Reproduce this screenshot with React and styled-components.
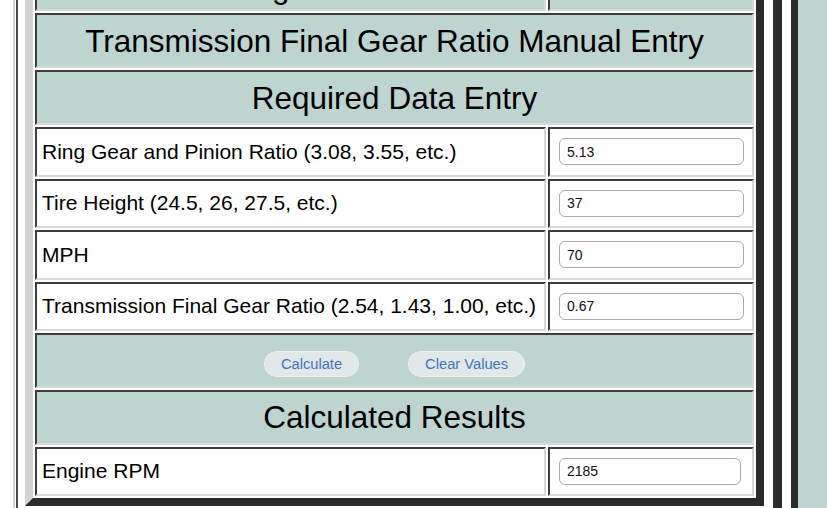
import React from "react";
import styled, { createGlobalStyle, css } from "styled-components";

const GlobalStyle = createGlobalStyle`
  html, body {
    margin: 0;
    padding: 0;
    background: #ffffff;
    font-family: "Liberation Sans", Arial, Helvetica, sans-serif;
    color: #000;
    overflow: hidden;
  }
`;

const TEAL = "#bed4d1";
const DARK = "#2b2b2b";

/* page frame: white gutter, double rule, content column, teal side column */
const Page = styled.div`
  display: flex;
  margin-top: -54px;
  min-height: calc(100vh + 54px);
`;

const Gutter = styled.div`
  width: 13px;
  flex: none;
`;

const Frame = styled.div`
  display: flex;
  flex: none;
  border-left: 2px solid #cfcfcf;
  padding-left: 1px;
`;

const Main = styled.div`
  border-left: 2px solid #4a4a4a;
  border-right: 9px solid ${DARK};
  padding: 0 9px 24px 7px;
`;

const Spacer = styled.div`
  width: 9px;
  flex: none;
`;

const Side = styled.div`
  flex: 1;
  border-left: 7px solid ${DARK};
  background: ${TEAL};
`;

/* calculator table */
const Table = styled.table`
  width: 739px;
  border-collapse: separate;
  border-spacing: 2px;
  border: 8px solid;
  border-color: #d4d4d4 ${DARK} ${DARK} #d4d4d4;
  background: #ffffff;
`;

const cellBase = css`
  box-sizing: border-box;
  border: 2px solid;
  border-color: #3d3d3d #d8d8d8 #d8d8d8 #3d3d3d;
  padding: 0;
  vertical-align: middle;
`;

const TailCell = styled.td`
  ${cellBase};
  background: ${TEAL};
  height: 55px;
  text-align: center;
  vertical-align: bottom;
  padding-bottom: 4px;
  font-size: 31.5px;
  line-height: 36px;
  width: ${(p) => (p.$wide ? "511px" : "auto")};
`;

const HeadCell = styled.td`
  ${cellBase};
  background: ${TEAL};
  height: 55px;
  text-align: center;
  font-size: 31.5px;
  line-height: 36px;
`;

const LabelCell = styled.td`
  ${cellBase};
  width: 511px;
  height: 49.5px;
  padding-left: 5px;
  font-size: 21px;
  line-height: 24px;
  background: #ffffff;
  white-space: nowrap;
`;

const InputCell = styled.td`
  ${cellBase};
  padding-left: 9px;
  background: #ffffff;
`;

const ActionCell = styled.td`
  ${cellBase};
  background: ${TEAL};
  height: 54.5px;
  padding-top: 8px;
`;

const Field = styled.input`
  box-sizing: border-box;
  display: block;
  width: ${(p) => p.$w || 185}px;
  height: 27px;
  border: 1px solid #a9a9a9;
  border-radius: 6px;
  padding: 0 7px;
  background: #ffffff;
  font-family: "Liberation Sans", Arial, sans-serif;
  font-size: 14px;
  color: #111;
  outline: none;
`;

const Actions = styled.div`
  display: flex;
  justify-content: center;
  gap: 49px;
`;

const Pill = styled.button`
  height: 26px;
  padding: 0 16px;
  border-radius: 13px;
  border: 1px solid #eef2f3;
  background: #e2e7e9;
  color: #3e74c2;
  font-family: "Liberation Sans", Arial, sans-serif;
  font-size: 14.7px;
  line-height: 24px;
  cursor: pointer;
`;

const inputs = [
  { label: "Ring Gear and Pinion Ratio (3.08, 3.55, etc.)", value: "5.13" },
  { label: "Tire Height (24.5, 26, 27.5, etc.)", value: "37" },
  { label: "MPH", value: "70" },
  { label: "Transmission Final Gear Ratio (2.54, 1.43, 1.00, etc.)", value: "0.67" },
];

export default function App() {
  return (
    <>
      <GlobalStyle />
      <Page>
        <Gutter />
        <Frame>
          <Main>
            <Table>
              <tbody>
                <tr>
                  <TailCell $wide>Gearing Method</TailCell>
                  <TailCell />
                </tr>
                <tr>
                  <HeadCell colSpan={2}>Transmission Final Gear Ratio Manual Entry</HeadCell>
                </tr>
                <tr>
                  <HeadCell colSpan={2}>Required Data Entry</HeadCell>
                </tr>
                {inputs.map((row) => (
                  <tr key={row.label}>
                    <LabelCell>{row.label}</LabelCell>
                    <InputCell>
                      <Field type="text" defaultValue={row.value} />
                    </InputCell>
                  </tr>
                ))}
                <tr>
                  <ActionCell colSpan={2}>
                    <Actions>
                      <Pill type="button">Calculate</Pill>
                      <Pill type="button">Clear Values</Pill>
                    </Actions>
                  </ActionCell>
                </tr>
                <tr>
                  <HeadCell colSpan={2}>Calculated Results</HeadCell>
                </tr>
                <tr>
                  <LabelCell>Engine RPM</LabelCell>
                  <InputCell>
                    <Field type="text" $w={182} defaultValue="2185" readOnly />
                  </InputCell>
                </tr>
              </tbody>
            </Table>
          </Main>
        </Frame>
        <Spacer />
        <Side />
      </Page>
    </>
  );
}
